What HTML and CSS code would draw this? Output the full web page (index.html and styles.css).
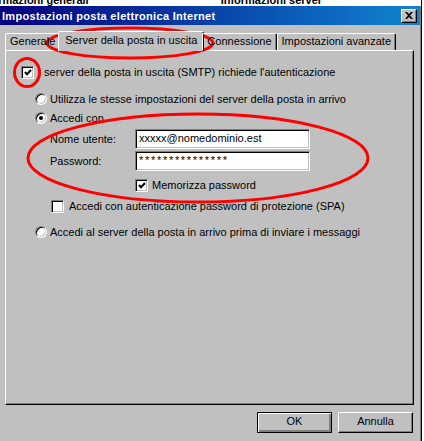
FILE: index.html
```html
<!DOCTYPE html>
<html lang="it">

<head>
    <meta charset="UTF-8" />
    <title>Impostazioni posta elettronica Internet</title>
    <link rel="stylesheet" href="styles.css">
</head>

<body>
    <div class="screen">
        <div class="main">
            <!-- finestra dietro, tagliata -->
            <div class="behind">
                <span class="behind-a">Informazioni generali</span>
                <span class="behind-b">Informazioni server</span>
            </div>

            <div class="window">
                <div class="titlebar">
                    <span class="title">Impostazioni posta elettronica Internet</span>
                    <span class="close">
                        <svg width="8" height="7" viewBox="0 0 8 7">
                            <path d="M0 0h2l2 2 2-2h2L5 3.5 8 7H6L4 5 2 7H0l3-3.5z" fill="#000" />
                        </svg>
                    </span>
                </div>

                <!-- schede -->
                <div class="tabs">
                    <div class="tab">Generale</div>
                    <div class="tab active">Server della posta in uscita</div>
                    <div class="tab">Connessione</div>
                    <div class="tab">Impostazioni avanzate</div>
                </div>

                <div class="panel">
                    <div class="row r1">
                        <span class="check on">
                            <svg width="8" height="7" viewBox="0 0 8 7">
                                <polyline points="1,3 3,5.2 7,1" fill="none" stroke="#000" stroke-width="2" />
                            </svg>
                        </span>
                        <span>I server della posta in uscita (SMTP) richiede l'autenticazione</span>
                    </div>
                    <div class="row r2 indent">
                        <span class="radio"></span>
                        <span>Utilizza le stesse impostazioni del server della posta in arrivo</span>
                    </div>
                    <div class="row r3 indent">
                        <span class="radio on"></span>
                        <span>Accedi con</span>
                    </div>
                    <div class="row field-row r4">
                        <span class="label">Nome utente:</span>
                        <div class="field">xxxxx@nomedominio.est</div>
                    </div>
                    <div class="row field-row r5">
                        <span class="label">Password:</span>
                        <div class="field secret">***************</div>
                    </div>
                    <div class="row r6">
                        <span class="check on">
                            <svg width="8" height="7" viewBox="0 0 8 7">
                                <polyline points="1,3 3,5.2 7,1" fill="none" stroke="#000" stroke-width="2" />
                            </svg>
                        </span>
                        <span>Memorizza password</span>
                    </div>
                    <div class="row r7">
                        <span class="check"></span>
                        <span>Accedi con autenticazione password di protezione (SPA)</span>
                    </div>
                    <div class="row r8 indent">
                        <span class="radio"></span>
                        <span>Accedi al server della posta in arrivo prima di inviare i messaggi</span>
                    </div>
                </div>

                <div class="buttons">
                    <div class="btn default">OK</div>
                    <div class="btn">Annulla</div>
                </div>
            </div>
        </div>
        <div class="edge"></div>
    </div>

    <!-- cerchi rossi disegnati sopra -->
    <svg class="marks" width="424" height="441" viewBox="0 0 424 441">
        <ellipse cx="130" cy="43" rx="83" ry="15" />
        <ellipse cx="27" cy="72.5" rx="12.5" ry="14" />
        <ellipse cx="198" cy="158" rx="170" ry="44" />
    </svg>
</body>

</html>
```

FILE: styles.css
```css
* {
    margin: 0;
    padding: 0;
    box-sizing: border-box;
}

body {
    width: 424px;
    height: 441px;
    overflow: hidden;
    position: relative;
    background: #fff;
    font-family: "Liberation Sans", Arial, sans-serif;
    font-size: 11px;
    color: #000;
}

.screen {
    display: flex;
    height: 441px;
}

.main {
    width: 421px;
    display: flex;
    flex-direction: column;
}

.edge {
    width: 1px;
    background: #000;
}

/* finestra dietro */
.behind {
    height: 6px;
    overflow: hidden;
    background: #fff;
    display: flex;
    font-weight: bold;
    line-height: 11px;
}

.behind span {
    margin-top: -5px;
    white-space: nowrap;
}

.behind-a {
    margin-left: -22px;
}

.behind-b {
    margin-left: 132px;
}

.window {
    flex: 1;
    background: #c0c0c0;
    border-right: 1px solid #808080;
}

.titlebar {
    height: 19px;
    display: flex;
    align-items: center;
    justify-content: space-between;
    padding: 0 3px 0 2px;
    background: linear-gradient(to right, #000080, #1084d0);
}

.title {
    color: #fff;
    font-weight: bold;
    letter-spacing: 0.3px;
    white-space: nowrap;
}

.close {
    width: 16px;
    height: 14px;
    display: flex;
    align-items: center;
    justify-content: center;
    background: #c0c0c0;
    border: 1px solid;
    border-color: #fff #000 #000 #fff;
    box-shadow: inset -1px -1px #808080;
}

/* schede */
.tabs {
    height: 25px;
    display: flex;
    align-items: flex-end;
    padding-left: 5px;
    position: relative;
    z-index: 1;
}

.tab {
    height: 17px;
    padding: 0 4px;
    line-height: 15px;
    white-space: nowrap;
    border: 1px solid;
    border-bottom: none;
    border-color: #fff #000 transparent #fff;
    border-radius: 2px 2px 0 0;
    box-shadow: inset -1px 0 #808080;
}

.tab.active {
    height: 20px;
    margin: 0 -2px -1px;
    padding: 0 6px;
    line-height: 17px;
    background: #c0c0c0;
}

.panel {
    height: 355px;
    margin: 0 6px 0 5px;
    border: 1px solid;
    border-color: #fff #000 #000 #fff;
    box-shadow: inset -1px -1px #808080;
    display: flex;
    flex-direction: column;
}

.row {
    height: 14px;
    display: flex;
    align-items: center;
    white-space: nowrap;
}

.r1 { margin: 14px 0 0 15px; gap: 4px; }
.r2 { margin-top: 13px; }
.r3 { margin-top: 5px; }
.r4 { margin-top: 4px; }
.r5 { margin-top: 2px; }
.r6 { margin: 7px 0 0 129px; gap: 4px; }
.r7 { margin: 7px 0 0 45px; gap: 5px; }
.r8 { margin-top: 12px; }

.indent {
    margin-left: 29px;
    gap: 3px;
}

.field-row {
    height: 20px;
    margin-left: 44px;
}

.label {
    width: 85px;
}

.field {
    width: 175px;
    height: 20px;
    padding-left: 3px;
    line-height: 17px;
    background: #fff;
    border: 1px solid;
    border-color: #808080 #fff #fff #808080;
    box-shadow: inset 1px 1px #000, inset -1px -1px #c0c0c0;
}

.field.secret {
    letter-spacing: 1.7px;
}

.check {
    width: 13px;
    height: 13px;
    flex: none;
    display: flex;
    align-items: center;
    justify-content: center;
    background: #fff;
    border: 1px solid;
    border-color: #808080 #fff #fff #808080;
    box-shadow: inset 1px 1px #000, inset -1px -1px #c0c0c0;
}

.radio {
    width: 12px;
    height: 12px;
    flex: none;
    position: relative;
    border-radius: 50%;
    background: #fff;
    border: 1px solid;
    border-color: #808080 #fff #fff #808080;
    box-shadow: inset 1px 1px #000, inset -1px -1px #c0c0c0;
}

.radio.on::after {
    content: "";
    position: absolute;
    left: 3px;
    top: 3px;
    width: 4px;
    height: 4px;
    border-radius: 50%;
    background: #000;
}

/* pulsanti */
.buttons {
    display: flex;
    justify-content: flex-end;
    gap: 6px;
    margin-top: 7px;
    padding-right: 7px;
}

.btn {
    width: 75px;
    height: 21px;
    line-height: 17px;
    text-align: center;
    border: 1px solid;
    border-color: #fff #000 #000 #fff;
    box-shadow: inset -1px -1px #808080;
}

.btn.default {
    border-color: #000;
    box-shadow: inset 1px 1px #fff, inset -2px -2px #808080;
}

.marks {
    position: absolute;
    left: 0;
    top: 0;
    pointer-events: none;
}

.marks ellipse {
    fill: none;
    stroke: #f00;
    stroke-width: 3;
}
```
